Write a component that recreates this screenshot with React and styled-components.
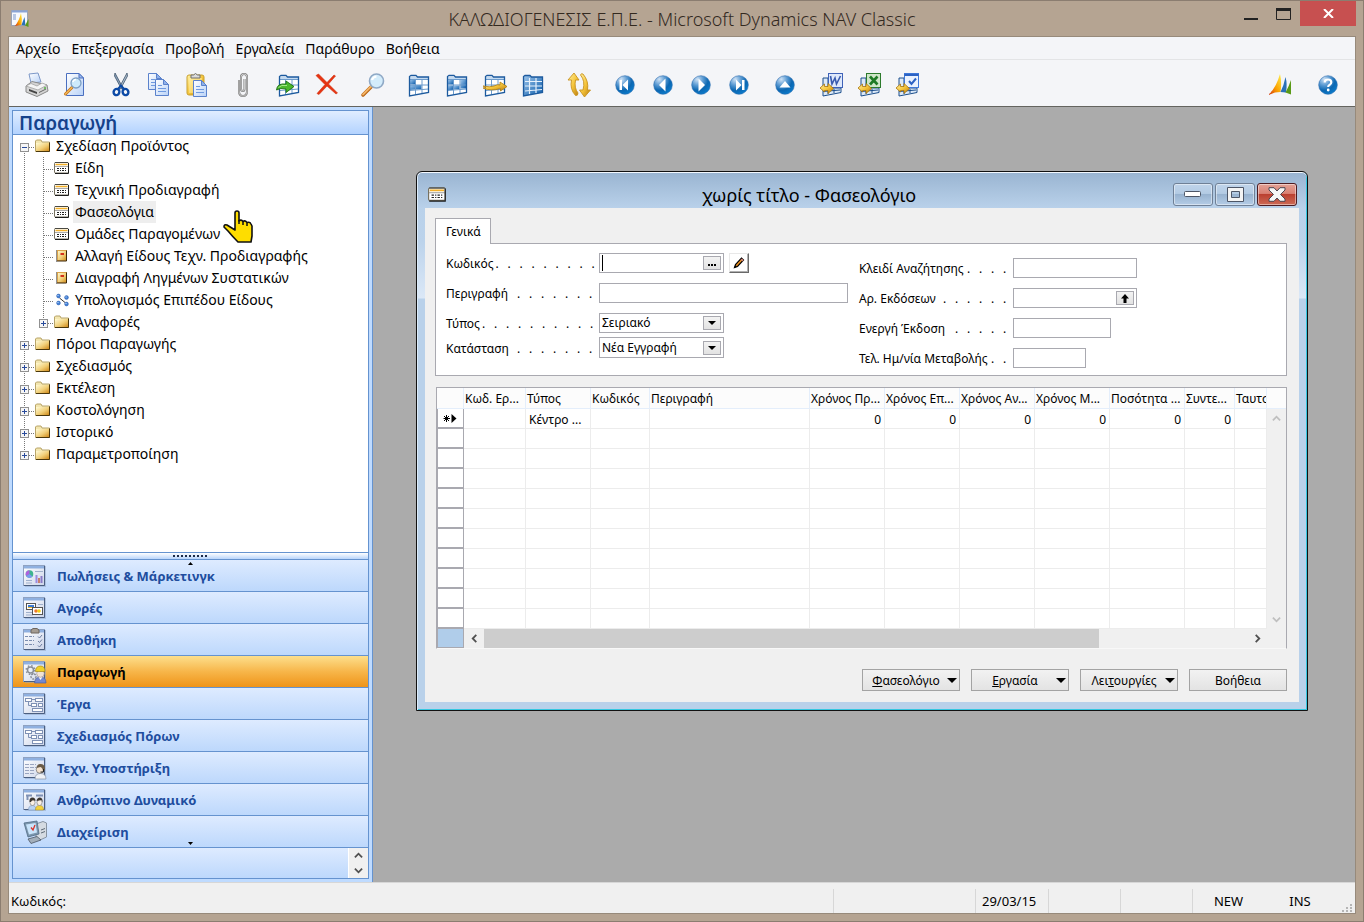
import React from 'react'
import styled, { createGlobalStyle } from 'styled-components'

const GlobalStyle = createGlobalStyle`
  * { box-sizing: border-box; }
  body {
    margin: 0;
    color: #000;
    font-family: "Noto Sans", "Open Sans", sans-serif;
    font-size: 13px;
  }
  button, input, select {
    margin: 0;
    padding: 0;
    border: 0;
    background: none;
    color: inherit;
    font: inherit;
  }
  input:focus, select:focus, button:focus { outline: none; }
  ul { list-style: none; margin: 0; padding: 0; }
  svg { display: block; flex: none; }
`

const Frame = styled.div`
  display: flex;
  flex-direction: column;
  min-height: 100vh;
  padding: 0 7px 7px;
  border: 1px solid #8b7d70;
  background: #b5a492;
`

const TitleBar = styled.header`
  display: grid;
  grid-template-columns: 124px 1fr 124px;
  height: 35px;
`

const AppIcon = styled.div`
  padding: 8px 0 0 3px;
`

const AppTitle = styled.h1`
  margin: 0;
  color: #33291f;
  font-size: 18px;
  font-weight: 300;
  line-height: 36px;
  text-align: center;
  white-space: nowrap;
`

const CaptionButtons = styled.div`
  display: flex;
  justify-content: flex-end;
  align-items: flex-start;
`

const CaptionButton = styled.button`
  display: flex;
  align-items: center;
  justify-content: center;
  width: ${props => props.$close ? '56px' : '33px'};
  height: 25px;
  background: ${props => props.$close ? '#c75050' : 'none'};
`

const Client = styled.div`
  flex: 1;
  display: flex;
  flex-direction: column;
  border: 1px solid #978a7b;
  background: #f4f5f8;
`

const MenuBar = styled.nav`
  display: flex;
  height: 23px;
  padding-left: 7px;
  gap: 11px;
  border-bottom: 1px solid #e3e4e6;
`

const MenuItem = styled.button`
  font-size: 14px;
  line-height: 23px;
`

const Toolbar = styled.div`
  display: flex;
  align-items: center;
  gap: 8px;
  height: 47px;
  padding: 3px 8px 0 9px;
  border-bottom: 1px solid #64645f;
`

const ToolGroup = styled.div`
  display: flex;
  gap: ${props => props.$gap || 0}px;
  margin-left: ${props => props.$right ? 'auto' : '0'};
`

const ToolButton = styled.button`
  display: flex;
  align-items: center;
  justify-content: center;
  width: 38px;
  height: 38px;
`

const Workspace = styled.main`
  flex: 1;
  display: flex;
  background: #ababab;
`

const Sidebar = styled.aside`
  position: relative;
  display: flex;
  width: 364px;
  padding: 3px;
  border-right: 1px solid #6593cf;
  background: #bfdbff;
`

const SidebarBox = styled.div`
  flex: 1;
  display: flex;
  flex-direction: column;
  border: 1px solid #6593cf;
  background: #fff;
`

const SidebarTitle = styled.h2`
  height: 24px;
  margin: 0;
  padding-left: 6px;
  border-bottom: 1px solid #6593cf;
  background: linear-gradient(#e0edff, #b3d3ff);
  color: #15428b;
  font-size: 19px;
  font-weight: 600;
  line-height: 24px;
`

const Tree = styled.ul`
  flex: 1;
  padding-left: 2px;
`

const TreeRow = styled.div`
  display: flex;
  align-items: center;
  height: 22px;
`

const TreeIcon = styled.span`
  width: 20px;
  padding-left: 1px;
`

const TreeLabel = styled.button`
  height: 22px;
  padding: 0 2px;
  background: ${props => props.$selected ? '#eeeeee' : 'none'};
  font-size: 14px;
  line-height: 22px;
  white-space: nowrap;
`

const Splitter = styled.div`
  display: flex;
  align-items: center;
  justify-content: center;
  height: 8px;
  border-top: 1px solid #6593cf;
  border-bottom: 1px solid #6593cf;
  background: linear-gradient(#fff, #b9d5fb);
`

const Departments = styled.div`
  position: relative;
`

const ScrollHint = styled.svg`
  position: absolute;
  left: 175px;
  ${props => props.$end ? 'bottom: 3px;' : 'top: 2px;'}
`

const Department = styled.button`
  display: flex;
  align-items: center;
  gap: 10px;
  width: 100%;
  height: 32px;
  padding-left: 10px;
  border-bottom: 1px solid #6593cf;
  background: ${props => props.$active
    ? 'linear-gradient(#fddf8c, #f7b64a 50%, #ef9419)'
    : 'linear-gradient(#deebff, #bdd8fc)'};
  color: ${props => props.$active ? '#000' : '#204d9e'};
  font-size: 13px;
  font-weight: 700;
`

const SidebarFooter = styled.div`
  display: flex;
  justify-content: flex-end;
  height: 30px;
  background: linear-gradient(#deebff, #bdd8fc);
`

const Spinner = styled.div`
  display: flex;
  flex-direction: column;
  width: 20px;
  border-left: 1px solid #fff;
  background: #f0f0f0;
`

const SpinnerButton = styled.button`
  flex: 1;
  display: flex;
  align-items: center;
  justify-content: center;
`

const HandCursor = styled.svg`
  position: absolute;
  left: 214px;
  top: 103px;
`

const Desktop = styled.div`
  position: relative;
  flex: 1;
`

const FormWindow = styled.section`
  position: absolute;
  left: 43px;
  top: 64px;
  width: 892px;
  padding: 1px 8px 8px;
  border: 1px solid #111;
  border-radius: 6px 6px 0 0;
  background: linear-gradient(#99b4d1, #b9d1ea 36px, #bcd3eb 70px, #dbe8f7 126px, #b9d1ea 127px);
  box-shadow: inset 0 1px #f2f8ff, inset 1px 0 #dcecfa, inset -1px -1px #35c7e0;
`

const FormTitleBar = styled.div`
  display: grid;
  grid-template-columns: 19px 1fr 126px;
  align-items: center;
  height: 35px;
  padding: 8px 2px 0 3px;
`

const FormTitle = styled.h2`
  margin: 0;
  font-size: 18px;
  font-weight: 400;
  line-height: 24px;
  text-align: center;
`

const FormButtons = styled.div`
  display: flex;
  justify-content: flex-end;
  gap: 2px;
`

const FormButton = styled.button`
  display: flex;
  align-items: center;
  justify-content: center;
  width: 40px;
  height: 23px;
  border: 1px solid ${props => props.$close ? '#4d1c22' : '#6f8096'};
  border-radius: 3px;
  background: ${props => props.$close
    ? 'linear-gradient(#e3a196, #d98073 45%, #bb4030 50%, #cc6a55)'
    : 'linear-gradient(#c0d4ea, #b3cbe4 45%, #98b3d0 50%, #b4cce6)'};
  box-shadow: inset 0 0 0 1px rgba(255, 255, 255, 0.45);
`

const FormBody = styled.div`
  padding: 10px 12px 11px 10px;
  background: #f0f0f0;
`

const Tab = styled.button`
  position: relative;
  display: block;
  width: 56px;
  height: 26px;
  margin-bottom: -1px;
  padding-left: 10px;
  border: 1px solid #a9a9b0;
  border-bottom: 0;
  background: #fff;
  font-size: 12px;
  text-align: left;
`

const Panel = styled.div`
  display: grid;
  grid-template-columns: 413px 1fr;
  padding: 9px 10px 7px;
  border: 1px solid #a9a9b0;
  background: #fff;
`

const FieldColumn = styled.div`
  display: flex;
  flex-direction: column;
  gap: 10px;
  padding-top: ${props => props.$lower ? '5px' : '0'};
`

const FieldPair = styled.div`
  display: flex;
  flex-direction: column;
  gap: 4px;
`

const FieldRow = styled.div`
  display: flex;
  align-items: center;
`

const FieldCaption = styled.label`
  display: flex;
  justify-content: space-between;
  width: ${props => props.$wide ? '154px' : '153px'};
  height: 20px;
  font-size: 12px;
  line-height: 22px;
  white-space: nowrap;
`

const Leader = styled.span`
  display: flex;
`

const LeaderDot = styled.span`
  width: 12px;
  padding-left: 2px;
`

const Box = styled.div`
  display: flex;
  align-items: center;
  width: ${props => props.$w}px;
  height: ${props => props.$h || 20}px;
  padding: 0 2px;
  border: 1px solid #a9a9b0;
  background: #fff;
`

const Caret = styled.span`
  width: 1px;
  height: 16px;
  background: #000;
`

const TextInput = styled.input`
  flex: 1;
  width: 0;
  height: 100%;
  font-size: 12px;
`

const Select = styled.select`
  flex: 1;
  width: 0;
  appearance: none;
  font-size: 12px;
  line-height: 18px;
`

const MiniButton = styled.button`
  display: flex;
  align-items: center;
  justify-content: center;
  width: 18px;
  height: 14px;
  border: 1px solid #a9a9b0;
  background: linear-gradient(#f3f3f3, #e2e2e2);
`

const EditButton = styled.button`
  display: flex;
  align-items: center;
  justify-content: center;
  width: 20px;
  height: 20px;
  margin-left: 5px;
  border: 1px solid;
  border-color: #e8e8e8 #696969 #696969 #e8e8e8;
  background: #fff;
  box-shadow: inset -1px -1px #b0b0b0;
`

const Grid = styled.div`
  margin: 11px 0 0 1px;
  border: 1px solid #a9a9b0;
  border-bottom-color: #f8f8f8;
`

const Lines = styled.div`
  display: flex;
`

const Table = styled.table`
  flex: 1;
  width: 0;
  table-layout: fixed;
  border-collapse: separate;
  border-spacing: 0;
  background: #fff;
  font-size: 12px;
`

const Th = styled.th`
  height: 21px;
  padding: 1px 0 0 1px;
  overflow: hidden;
  border-right: 1px solid #e4eefb;
  border-bottom: 1px solid #e4eefb;
  background: #fcfcfc;
  font-weight: 400;
  line-height: 19px;
  text-align: left;
  white-space: nowrap;
`

const Td = styled.td`
  height: 20px;
  padding: 2px 3px 0;
  overflow: hidden;
  border-right: 1px solid #ececec;
  border-bottom: 1px solid #ececec;
  line-height: 17px;
  text-align: ${props => props.$num ? 'right' : 'left'};
  white-space: nowrap;
`

const RowSelector = styled.td`
  height: 20px;
  padding: 0 0 0 5px;
  border: 1px solid #a9a9b0;
  border-top-width: 0;
  border-bottom-width: 2px;
`

const VScroll = styled.div`
  display: flex;
  flex-direction: column;
  width: 19px;
  background: #f0f0f0;
`

const VScrollHead = styled.div`
  height: 21px;
  border-bottom: 1px solid #e4eefb;
  background: #fcfcfc;
`

const VScrollTrack = styled.div`
  flex: 1;
  display: flex;
  flex-direction: column;
  justify-content: space-between;
`

const ArrowButton = styled.button`
  display: flex;
  align-items: center;
  justify-content: center;
  width: ${props => props.$w || 18}px;
  height: 19px;
`

const HScroll = styled.div`
  display: flex;
  height: 19px;
`

const Corner = styled.div`
  width: 27px;
  border: 1px solid #a9a9b0;
  border-top: 0;
  background: #b0cdea;
`

const Thumb = styled.div`
  width: 615px;
  background: #cdcdcd;
`

const Spacer = styled.div`
  flex: 1;
`

const Actions = styled.div`
  display: flex;
  justify-content: flex-end;
  gap: 11px;
  margin-top: 20px;
`

const ActionButton = styled.button`
  display: flex;
  align-items: center;
  width: 98px;
  height: 22px;
  padding: 0 2px 0 2px;
  border: 1px solid #a3a3a3;
  background: linear-gradient(#f2f2f2, #e3e3e3);
  font-size: 12px;
`

const ActionText = styled.span`
  flex: 1;
  text-align: center;
`

const StatusBar = styled.footer`
  display: flex;
  align-items: flex-end;
  height: 31px;
  border-top: 1px solid #d7d7d7;
  background: #f0f0f0;
`

const StatusCell = styled.div`
  flex: ${props => props.$w ? 'none' : '1'};
  width: ${props => props.$w ? props.$w + 'px' : 'auto'};
  height: 24px;
  padding-left: ${props => props.$pad || 0}px;
  border-left: ${props => props.$line ? '1px solid #d7d7d7' : '0'};
  font-size: 13px;
  line-height: 24px;
  text-align: ${props => props.$center ? 'center' : 'left'};
`

/* ---------- drawings ---------- */

const Defs = () => (
  <svg width="0" height="0" style={{ position: 'absolute' }} aria-hidden="true">
    <defs>
      <radialGradient id="ball" cx="0.3" cy="0.2" r="0.9">
        <stop offset="0" stopColor="#cfe2f5" />
        <stop offset="0.35" stopColor="#5c9bd3" />
        <stop offset="0.65" stopColor="#0b67b2" />
        <stop offset="1" stopColor="#0a7fd0" />
      </radialGradient>
      <linearGradient id="gold" x1="0" y1="0" x2="1" y2="1">
        <stop offset="0" stopColor="#fff3a8" />
        <stop offset="0.5" stopColor="#f6c63c" />
        <stop offset="1" stopColor="#b87a0c" />
      </linearGradient>
      <linearGradient id="folder" x1="0" y1="0" x2="1" y2="1">
        <stop offset="0" stopColor="#fffbd6" />
        <stop offset="0.55" stopColor="#f1cf78" />
        <stop offset="1" stopColor="#cf8a1a" />
      </linearGradient>
      <linearGradient id="sheet" x1="0" y1="0" x2="1" y2="1">
        <stop offset="0" stopColor="#ffffff" />
        <stop offset="1" stopColor="#b9d2f7" />
      </linearGradient>
      <linearGradient id="pane" x1="0" y1="0" x2="1" y2="1">
        <stop offset="0" stopColor="#ffffff" />
        <stop offset="1" stopColor="#ccd5ea" />
      </linearGradient>
      <linearGradient id="blueCell" x1="0" y1="0" x2="1" y2="1">
        <stop offset="0" stopColor="#9cc4ea" />
        <stop offset="1" stopColor="#0b5cab" />
      </linearGradient>
      <linearGradient id="sail" x1="0" y1="1" x2="1" y2="0">
        <stop offset="0" stopColor="#d2350f" />
        <stop offset="0.45" stopColor="#fba100" />
        <stop offset="1" stopColor="#fff04a" />
      </linearGradient>
    </defs>
  </svg>
)

const Icon = ({ children, size = 26 }) => (
  <svg width={size} height={size} viewBox={`0 0 ${size} ${size}`} aria-hidden="true">{children}</svg>
)

const Printer = () => (
  <Icon>
    <path d="M7 11 L5 2 L14 1 L17 10Z" fill="url(#sheet)" stroke="#7d98c8" />
    <path d="M2 14 L8 9.500 L23 13 L24 19 L13 24.500 L2 20Z" fill="#d4d4d4" stroke="#8a8a8a" />
    <path d="M2 14 L14 18 L23 13 L18 11 L13 14 L7 11.500Z" fill="#f5f5f5" stroke="#999" strokeWidth="0.700" />
    <path d="M5 17 L13 20 V22 L5 19Z" fill="#444" />
    <path d="M15 20.500 L22 17" stroke="#666" />
    <circle cx="21" cy="16" r="1" fill="#55b844" />
  </Icon>
)

const Preview = () => (
  <Icon>
    <path d="M4.500 1.500 H17 L21.500 6 V23.500 H4.500Z" fill="url(#sheet)" stroke="#4a6fc0" />
    <path d="M17 1.500 V6 H21.500Z" fill="#9fbdf0" stroke="#4a6fc0" />
    <path d="M10 15.500 L3.500 22" stroke="#c77515" strokeWidth="3" strokeLinecap="round" />
    <path d="M10 15.500 L3.500 22" stroke="#f5b95a" strokeWidth="1.200" strokeLinecap="round" />
    <circle cx="14" cy="11" r="5" fill="#cdeafc" stroke="#7d9fc4" strokeWidth="1.300" />
    <path d="M10.800 10 A3.500 3.500 0 0 1 14 7.500" stroke="#fff" strokeWidth="1.500" fill="none" />
  </Icon>
)

const Scissors = () => (
  <Icon>
    <path d="M7 1 L15 16 L13.500 17 L6.500 4Z" fill="#8aa0b8" stroke="#3f546c" strokeWidth="0.800" />
    <path d="M19 1 L11 16 L12.500 17 L19.500 4Z" fill="#a8bacb" stroke="#3f546c" strokeWidth="0.800" />
    <ellipse cx="8.500" cy="20" rx="2.800" ry="3.200" fill="none" stroke="#0c4aa6" strokeWidth="2.400" transform="rotate(25 8.500 20)" />
    <ellipse cx="17.500" cy="20" rx="2.800" ry="3.200" fill="none" stroke="#0c4aa6" strokeWidth="2.400" transform="rotate(-25 17.500 20)" />
    <path d="M10 17 L13 13.500 L16 17" fill="none" stroke="#0c4aa6" strokeWidth="2" />
  </Icon>
)

const Page = ({ x, y }) => (
  <g transform={`translate(${x} ${y})`}>
    <path d="M0.500 0.500 H8.500 L13.500 5.500 V16.500 H0.500Z" fill="url(#sheet)" stroke="#5b82cc" />
    <path d="M8.500 0.500 V5.500 H13.500Z" fill="#8fb1ea" stroke="#5b82cc" />
    <path d="M3 6.500 H7 M3 9.500 H11 M3 12.500 H11" stroke="#6f9ae0" />
  </g>
)

const CopyIcon = () => (
  <Icon>
    <Page x={2} y={1} />
    <Page x={9} y={7} />
  </Icon>
)

const PasteIcon = () => (
  <Icon>
    <rect x="3" y="3" width="17" height="20" rx="2" fill="url(#gold)" stroke="#c9a02e" />
    <path d="M5 6 H18 V21 H5Z" fill="#fff2b0" opacity="0.500" />
    <path d="M7 6 V3 H9.500 Q11.500 0 13.500 3 H16 V6Z" fill="#dcdcdc" stroke="#6f6f6f" />
    <Page x={9} y={8} />
  </Icon>
)

const Clip = () => (
  <Icon>
    <path d="M9 8 V19 Q9 24 13 24 Q17 24 17 19 V5 Q17 2 14 2 Q11 2 11 5 V17 Q11 19 13 19 Q14.500 19 14.500 17 V7" fill="none" stroke="#777" strokeWidth="2" />
    <path d="M9 8 V19 Q9 24 13 24 Q17 24 17 19 V5 Q17 2 14 2 Q11 2 11 5 V17 Q11 19 13 19 Q14.500 19 14.500 17 V7" fill="none" stroke="#e0e0e0" strokeWidth="0.800" />
  </Icon>
)

// Table in slight perspective: tab on the top left, bottom edge rising to the right.
const sheetOutline = 'M3.500 24 V4.500 L5 3.500 H10 L11.500 5 H22.500 V20.500Z'
const sheetGrid = 'M3.500 7.500 H22.500 M3.500 13 H22.500 M3.500 18.500 L22.500 17 M9.500 7.500 V22.500 M16 7.500 V21.500'

const Sheet = ({ fills = [] }) => (
  <g>
    <path d={sheetOutline} fill="#fff" />
    {fills.map(d => <path key={d} d={d} fill="url(#blueCell)" />)}
    <path d={sheetGrid} fill="none" stroke="#6c9bcc" />
    <path d="M4 5 H22 V7 H4Z" fill="#c3daf1" />
    <path d={sheetOutline} fill="none" stroke="#1c5a9e" strokeWidth="1.300" />
  </g>
)

const sheetFills = {
  left: ['M4 13 H15.500 V17 L4 18Z', 'M4 8 H9 V12.500 H4Z'],
  middle: ['M4 8 H9 V12.500 H4Z', 'M4 13.500 H9 V18 H4Z', 'M10 13.500 H15.500 V17 L10 17.500Z', 'M16.500 8 H22 V16.500 H16.500Z'],
}

const SheetIcon = ({ fills }) => <Icon><Sheet fills={fills} /></Icon>

const SheetFull = () => (
  <Icon>
    <path d={sheetOutline} fill="url(#blueCell)" stroke="#1c5a9e" strokeWidth="1.300" />
    <path d="M5 9.500 H22 M5 14 H22 M5 19 L22 17.500 M9.500 6 V22 M16 6 V21" stroke="#e6f1fc" strokeWidth="1.200" />
  </Icon>
)

const SheetJump = () => (
  <Icon>
    <Sheet fills={['M10 13.500 H15.500 V17 L10 17.500Z']} />
    <path d="M1 14 Q8 15.500 12 14 Q16 12 18 13 V10 L25 14.500 L18.500 19 V16.500 Q9 19.500 1 16 L4 15.500Z" fill="url(#gold)" stroke="#b07c10" strokeWidth="0.800" />
  </Icon>
)

const SheetInsert = () => (
  <Icon>
    <Sheet />
    <path d="M0.500 18 Q1 11 10 12 V9 L18 14.500 L10 20.500 V17 Q4 15.500 0.500 18Z" fill="#4cb82c" stroke="#1c6e12" strokeWidth="0.900" />
    <path d="M2.500 15.500 Q5 12.500 11 13.500" stroke="#a5ea88" strokeWidth="1" fill="none" />
  </Icon>
)

const DeleteIcon = () => (
  <Icon>
    <path d="M2 3.500 L4.500 2 L13 10.500 L20 3 L21.500 4 L14.500 12 L23.500 21 L22 22 L13 14 L5 22.500 L3 21.500 L11 12.500Z" fill="#e63312" stroke="#d22f0c" strokeWidth="0.600" />
  </Icon>
)

const Magnifier = () => (
  <Icon>
    <path d="M11 15 L3 23" stroke="#b76212" strokeWidth="3.500" strokeLinecap="round" />
    <path d="M11 14.500 L3 22.500" stroke="#f3b466" strokeWidth="1.800" strokeLinecap="round" />
    <circle cx="16.500" cy="9" r="7" fill="#d3ecfb" stroke="#8fa9c6" strokeWidth="1.600" />
    <path d="M12 8 A5 5 0 0 1 16.500 4.500" stroke="#fff" strokeWidth="2.200" fill="none" />
  </Icon>
)

const SortIcon = () => (
  <Icon>
    <path d="M8 1 L13 8 H9.500 Q8 16 12 21 Q12 24 9.500 23.500 Q3.500 17 5.500 8 H2Z" fill="url(#gold)" stroke="#c8931f" strokeWidth="0.900" />
    <path d="M18.500 25 L13.500 18 H17 Q19.500 9 14.500 3 Q15 1 17 2 Q23 9 21.500 18 H24.500Z" fill="url(#gold)" stroke="#c8931f" strokeWidth="0.900" />
  </Icon>
)

const ballGlyphs = {
  first: 'M7.500 8 H10 V18 H7.500Z M10.500 13 L16 7.500 V18.500Z',
  prev: 'M9 13 L15.500 6.500 V19.500Z',
  next: 'M17 13 L10.500 6.500 V19.500Z',
  last: 'M16 8 H18.500 V18 H16Z M15.500 13 L10 7.500 V18.500Z',
  up: 'M13 9 L18.500 15.500 H7.500Z',
}

const Ball = ({ glyph }) => (
  <Icon>
    <circle cx="13" cy="13" r="9.300" fill="url(#ball)" stroke="#2b6cae" strokeWidth="0.600" />
    <path d={ballGlyphs[glyph]} fill="#fff" />
  </Icon>
)

const HelpIcon = () => (
  <Icon>
    <circle cx="13" cy="13" r="9.300" fill="url(#ball)" stroke="#2b6cae" strokeWidth="0.600" />
    <path d="M9.700 10.500 Q9.700 7.500 13 7.500 Q16.300 7.500 16.300 10.200 Q16.300 12 14.500 12.900 Q13.200 13.600 13.200 15" fill="none" stroke="#fff" strokeWidth="2.200" />
    <circle cx="13.200" cy="18" r="1.400" fill="#fff" />
  </Icon>
)

const Export = ({ border, fill, glyph, stroke, weight }) => (
  <Icon>
    <path d="M5 6 V24 L23 20.500 V16 H10 V6Z" fill="#dce9f8" stroke="#1c4f8c" />
    <path d="M5 19.500 L22 18 M10 17 V22 M16 17 V21" stroke="#1c4f8c" />
    <rect x="10.500" y="1.500" width="14" height="14" fill={fill} stroke={border} />
    <path d={glyph} fill="none" stroke={stroke} strokeWidth={weight} />
    <path d="M2 16 L6.500 12 V14.500 H10 V11.500 L15.500 16.500 L10 21.500 V18.500 H6.500 V20Z" fill="url(#gold)" stroke="#a8720a" strokeWidth="0.800" />
  </Icon>
)

const Sails = () => (
  <Icon>
    <path d="M2 22 Q9 16 13 2 Q15 10 13.500 20 Q7 20 2 23Z" fill="url(#sail)" />
    <path d="M13.500 20 Q17 13 18.500 5 Q20.500 12 19 20.500Z" fill="#2a70b8" />
    <path d="M18.500 20.500 Q22 14 24 8 V22.500Z" fill="#5a9a16" />
  </Icon>
)

const Folder = () => (
  <svg width="16" height="14" viewBox="0 0 16 14" aria-hidden="true">
    <path d="M0.500 12.500 V2 L1.500 1 H6 L7 3 H14.500 V12.500Z" fill="#f3e6b0" stroke="#b8a468" />
    <path d="M1 4 H14 V12 H1Z" fill="url(#folder)" />
    <path d="M14.500 3.500 V12.500 H1" fill="none" stroke="#4a370c" />
  </svg>
)

const FormGlyph = ({ width = 16, height = 14 }) => (
  <svg width={width} height={height} viewBox="0 0 16 14" aria-hidden="true">
    <rect x="0.500" y="1.500" width="14" height="10.500" rx="1" fill="#fff" stroke="#77715f" />
    <path d="M1 1.500 H14" stroke="#4a4a44" />
    <path d="M1.500 3.500 H13.500" stroke="#f3b02a" strokeWidth="1.500" />
    <path d="M1 5.500 H14" stroke="#555" strokeWidth="0.500" />
    <path d="M3 7.500 H13 M3 9.500 H13" stroke="#222" strokeDasharray="2 1 1 1" />
    <path d="M1 12.500 H14.500 V2" fill="none" stroke="#1c1c1c" />
  </svg>
)

const BookGlyph = () => (
  <svg width="16" height="14" viewBox="0 0 16 14" aria-hidden="true">
    <rect x="3.500" y="1.500" width="9" height="10" fill="url(#folder)" stroke="#d9a24a" />
    <path d="M12.500 1.500 V12 H3" fill="none" stroke="#3b2606" />
    <path d="M6.500 5 H10" stroke="#d5301a" strokeWidth="2" />
    <path d="M2.500 1.500 V12.500" stroke="#222" strokeDasharray="1 1" />
  </svg>
)

const NodesGlyph = () => (
  <svg width="16" height="14" viewBox="0 0 16 14" aria-hidden="true">
    <path d="M5.500 5 L11 9.500" stroke="#333" />
    {[[4.500, 3], [12.500, 4.500], [4.500, 10], [12.500, 11]].map(([x, y]) => (
      <circle key={`${x}-${y}`} cx={x} cy={y} r="1.900" fill="#4583d8" stroke="#2858a8" strokeWidth="0.500" />
    ))}
    <path d="M3.500 2.500 h1 M11.500 4 h1 M3.500 9.500 h1 M11.500 10.500 h1" stroke="#cfe3ff" />
  </svg>
)

const treeIcons = { folder: Folder, form: FormGlyph, book: BookGlyph, nodes: NodesGlyph }

// One 19px step of the tree lines: what runs above, below and to the right.
const Branch = ({ up, down, right, box }) => (
  <svg width="19" height="22" viewBox="0 0 19 22" aria-hidden="true">
    {up && <path d="M9.500 0 V12" stroke="#777" strokeDasharray="1 1" />}
    {down && <path d="M9.500 12 V22" stroke="#777" strokeDasharray="1 1" />}
    {right && <path d="M10 12.500 H19" stroke="#777" strokeDasharray="1 1" />}
    {box && (
      <g>
        <rect x="5.500" y="8.500" width="8" height="8" fill="#f6f6f6" stroke="#919191" />
        <path d="M7 12.500 H12" stroke="#284a9b" />
        {box === '+' && <path d="M9.500 10 V15" stroke="#284a9b" />}
      </g>
    )}
  </svg>
)

const Chevron = ({ d, color = '#505050', size = 10 }) => (
  <svg width={size} height={size} viewBox="0 0 10 10" aria-hidden="true">
    <path d={d} fill="none" stroke={color} strokeWidth="2" />
  </svg>
)

const chevrons = {
  up: 'M1 7 L5 3 L9 7',
  down: 'M1 3 L5 7 L9 3',
  left: 'M7 1 L3 5 L7 9',
  right: 'M3 1 L7 5 L3 9',
}

const DownTriangle = ({ width = 8 }) => (
  <svg width={width} height={width / 2} viewBox="0 0 10 5" aria-hidden="true"><path d="M0 0 H10 L5 5Z" /></svg>
)

const paneArt = {
  sales: (
    <g>
      <circle cx="6.500" cy="10" r="3.800" fill="#3fb48f" />
      <path d="M6.500 10 V6.200 A4 4 0 0 0 3 12Z" fill="#b05fe0" />
      <path d="M6.500 10 L3 12 A4 4 0 0 0 9.500 12.500Z" fill="#7a9af0" />
      <path d="M12 7.500 H20 M3 16.500 H9 M3 19 H9" stroke="#9fb0cc" />
      <path d="M13.500 19 V11" stroke="#9c8ae0" strokeWidth="2" />
      <path d="M16 19 V14" stroke="#c8806f" strokeWidth="2" />
      <path d="M18.500 19 V12" stroke="#8a7bc8" strokeWidth="2" />
    </g>
  ),
  purchase: (
    <g>
      <path d="M3 16.500 H10 M3 19 H10 M15 8.500 H20" stroke="#9fb0cc" />
      <rect x="3.500" y="7.500" width="9" height="6" fill="#fff" stroke="#555" />
      <rect x="5" y="9" width="6" height="2" fill="#3a78d0" />
      <rect x="5" y="11" width="6" height="1" fill="#f0b824" />
      <rect x="9.500" y="11.500" width="10" height="7" fill="#fff" stroke="#555" />
      <circle cx="13" cy="15" r="1.800" fill="#f07a2a" />
      <circle cx="16" cy="15" r="1.800" fill="#f3d017" />
    </g>
  ),
  stock: (
    <g>
      <path d="M8 5 V2 L10 0.500 H14 L16 2 V5Z" fill="#a59c92" stroke="#6e665e" />
      <path d="M2 8.500 H11 M2 12.500 H11 M2 16.500 H11" stroke="#7b8db0" strokeDasharray="3 1" />
      <path d="M15 8.500 L16.500 10 L19 7 M15 13 L16.500 14.500 L19 11.500 M15 17.500 L16.500 19 L19 16" fill="none" stroke="#6d7ea0" />
    </g>
  ),
  production: (
    <g>
      <circle cx="7.500" cy="10" r="3" fill="none" stroke="#8a8f98" strokeWidth="1.500" />
      <circle cx="7.500" cy="10" r="4.300" fill="none" stroke="#8a8f98" strokeWidth="1.500" strokeDasharray="1.500 1.900" />
      <circle cx="10.500" cy="16.500" r="2.500" fill="none" stroke="#8a8f98" strokeWidth="1.500" strokeDasharray="2 1" />
      <path d="M11.500 23 Q12 17 17.500 17 Q23 17 23 23Z" fill="#7489d0" stroke="#4a5ca0" strokeWidth="0.700" />
      <path d="M15.500 17 L17.500 20 L19.500 17Z" fill="#fff" />
      <circle cx="17.500" cy="13.500" r="3.800" fill="#f0e2d4" stroke="#988" strokeWidth="0.600" />
      <path d="M12.500 11.500 Q12.500 6 17.500 6 Q22 6 22 11.500Z" fill="#f0d22a" stroke="#a98a10" strokeWidth="0.700" />
    </g>
  ),
  boxes: (
    <g fill="#fff" stroke="#7f91b5">
      <path d="M5.500 10 V13.500 H9 M9 7.500 H14" fill="none" />
      <rect x="2.500" y="6.500" width="6" height="3" />
      <rect x="12.500" y="6.500" width="7" height="3" />
      <rect x="8.500" y="11.500" width="5" height="3" />
      <rect x="15.500" y="11.500" width="4" height="3" />
      <rect x="9.500" y="16.500" width="10" height="3" />
    </g>
  ),
  support: (
    <g>
      <path d="M2 8.500 H13 M2 11.500 H13 M2 14.500 H11 M2 17.500 H11" stroke="#9aa5c0" strokeDasharray="4 1" />
      <path d="M12 23 Q12 17.500 17.500 17.500 Q23 17.500 23 23Z" fill="#eef1f6" stroke="#8893a6" strokeWidth="0.700" />
      <circle cx="17" cy="13.500" r="3.800" fill="#f4e2ce" stroke="#555" strokeWidth="0.600" />
      <path d="M13.500 12 Q14 7.500 18 8 Q22.500 8.500 22 14 L20 15.500 Q20 12 17.500 11Z" fill="#6b5c48" />
      <path d="M20.500 13 V16 H17.500" fill="none" stroke="#222" />
    </g>
  ),
  people: (
    <g>
      <path d="M3 7.500 H9 M13 7.500 H20 M4.500 8 V12" stroke="#7f91b5" strokeWidth="2" />
      <path d="M5.500 22 Q5.500 17.500 9.500 17.500 Q13 17.500 13 22Z" fill="#b9d4f4" stroke="#7893b8" strokeWidth="0.600" />
      <path d="M12.500 22 Q12.500 17.500 16.500 17.500 Q20.500 17.500 20.500 22Z" fill="#f4d33c" stroke="#b4962a" strokeWidth="0.600" />
      <ellipse cx="9.500" cy="14.500" rx="2.500" ry="3" fill="#fbf0e4" stroke="#777" strokeWidth="0.600" />
      <ellipse cx="16.500" cy="14.500" rx="2.500" ry="3" fill="#fbf0e4" stroke="#777" strokeWidth="0.600" />
      <path d="M6.500 14 Q6 9.500 9.500 9.500 Q12.500 9.500 12.500 13 Q9 11 8 14Z" fill="#3c3630" />
      <path d="M13.500 13 Q14 9.500 17 9.500 Q20 10 19.500 14.500 L18.500 12Z" fill="#3c3630" />
    </g>
  ),
}

const PaneIcon = ({ name }) => {
  if (name === 'admin') {
    return (
      <svg width="24" height="24" viewBox="0 0 24 24" aria-hidden="true">
        <path d="M13 4 L20 1.500 L23.500 3 V17 L17 20 L13 18Z" fill="#d5dbe2" stroke="#8692a0" />
        <path d="M18 10 L22 8.500 M18 13 L22 11.500" stroke="#5e6a76" />
        <path d="M1 3 L14 1 L16 14 L5 17Z" fill="#7c96ad" stroke="#4f6b85" strokeWidth="0.800" />
        <path d="M3 4.500 L12.500 3 L14 12.500 L6 14.500Z" fill="#c9e4fb" />
        <path d="M8 7.500 L10 10 L12 5" fill="none" stroke="#d9342a" strokeWidth="1.300" />
        <path d="M5 19 L14 16.500 L18 20 L8 23.500Z" fill="#a3afbb" stroke="#4a5663" strokeWidth="0.800" />
      </svg>
    )
  }
  return (
    <svg width="24" height="24" viewBox="0 0 24 24" aria-hidden="true">
      <rect x="2" y="2" width="21" height="21" fill="#8fa3c4" opacity="0.500" />
      <rect x="0.500" y="1.500" width="21" height="20" fill="url(#pane)" stroke="#8fa2c2" />
      <rect x="1" y="2" width="20" height="2.500" fill="#8fb0e0" />
      <path d="M21.500 2 V21.500 H1" fill="none" stroke="#4b5f80" />
      {paneArt[name]}
    </svg>
  )
}

/* ---------- data ---------- */

const menus = ['Αρχείο', 'Επεξεργασία', 'Προβολή', 'Εργαλεία', 'Παράθυρο', 'Βοήθεια']

const toolGroups = [
  [['Εκτύπωση', <Printer />], ['Προεπισκόπηση', <Preview />]],
  [['Αποκοπή', <Scissors />], ['Αντιγραφή', <CopyIcon />], ['Επικόλληση', <PasteIcon />]],
  [['Συνημμένα', <Clip />]],
  [['Εισαγωγή', <SheetInsert />], ['Διαγραφή', <DeleteIcon />]],
  [['Εύρεση', <Magnifier />]],
  [
    ['Φίλτρο πεδίου', <SheetIcon fills={sheetFills.left} />],
    ['Φίλτρο πίνακα', <SheetIcon fills={sheetFills.middle} />],
    ['Φίλτρο ροής', <SheetJump />],
    ['Εμφάνιση όλων', <SheetFull />],
  ],
  [['Ταξινόμηση', <SortIcon />]],
  [
    ['Πρώτη', <Ball glyph="first" />],
    ['Προηγούμενη', <Ball glyph="prev" />],
    ['Επόμενη', <Ball glyph="next" />],
    ['Τελευταία', <Ball glyph="last" />],
  ],
  [['Λίστα', <Ball glyph="up" />]],
  [
    ['Word', <Export border="#3f62b8" fill="#dfe9fb" stroke="#3a5cb0" weight="1.600" glyph="M12.500 4 L14 12 L17 6 L18.500 12 L22.500 4" />],
    ['Excel', <Export border="#2c7a2c" fill="#cfe6c8" stroke="#1e7a24" weight="2.600" glyph="M14 4.500 L21.500 12.500 M21.500 4.500 L14 12.500" />],
    ['Εργασία', <Export border="#3f78d8" fill="#eaf2ff" stroke="#2c62c4" weight="2" glyph="M10.500 3 H24.500 M15 9 L17.500 12 L22 6.500" />],
  ],
]

const tree = [
  { label: 'Σχεδίαση Προϊόντος', icon: 'folder', box: '-', first: true },
  { label: 'Είδη', icon: 'form', child: true },
  { label: 'Τεχνική Προδιαγραφή', icon: 'form', child: true },
  { label: 'Φασεολόγια', icon: 'form', child: true, selected: true },
  { label: 'Ομάδες Παραγομένων', icon: 'form', child: true },
  { label: 'Αλλαγή Είδους Τεχν. Προδιαγραφής', icon: 'book', child: true },
  { label: 'Διαγραφή Ληγμένων Συστατικών', icon: 'book', child: true },
  { label: 'Υπολογισμός Επιπέδου Είδους', icon: 'nodes', child: true },
  { label: 'Αναφορές', icon: 'folder', child: true, box: '+', last: true },
  { label: 'Πόροι Παραγωγής', icon: 'folder', box: '+' },
  { label: 'Σχεδιασμός', icon: 'folder', box: '+' },
  { label: 'Εκτέλεση', icon: 'folder', box: '+' },
  { label: 'Κοστολόγηση', icon: 'folder', box: '+' },
  { label: 'Ιστορικό', icon: 'folder', box: '+' },
  { label: 'Παραμετροποίηση', icon: 'folder', box: '+', last: true },
]

const departments = [
  ['Πωλήσεις & Μάρκετινγκ', 'sales'],
  ['Αγορές', 'purchase'],
  ['Αποθήκη', 'stock'],
  ['Παραγωγή', 'production'],
  ['Έργα', 'boxes'],
  ['Σχεδιασμός Πόρων', 'boxes'],
  ['Τεχν. Υποστήριξη', 'support'],
  ['Ανθρώπινο Δυναμικό', 'people'],
  ['Διαχείριση', 'admin'],
]

const columns = [
  { title: 'Κωδ. Ερ...', width: 62, value: '' },
  { title: 'Τύπος', width: 65, value: 'Κέντρο ...' },
  { title: 'Κωδικός', width: 59, value: '' },
  { title: 'Περιγραφή', width: 160, value: '' },
  { title: 'Χρόνος Πρ...', width: 75, value: '0' },
  { title: 'Χρόνος Επ...', width: 75, value: '0' },
  { title: 'Χρόνος Αν...', width: 75, value: '0' },
  { title: 'Χρόνος Μ...', width: 75, value: '0' },
  { title: 'Ποσότητα ...', width: 75, value: '0' },
  { title: 'Συντε...', width: 50, value: '0' },
  { title: 'Ταυτο', value: '' },
]

/* ---------- parts ---------- */

const Caption = ({ id, text, dots, wide }) => (
  <FieldCaption htmlFor={id} $wide={wide}>
    <span>{text}</span>
    <Leader aria-hidden="true">
      {Array.from({ length: dots }, (_, i) => <LeaderDot key={i}>.</LeaderDot>)}
    </Leader>
  </FieldCaption>
)

const TreeItem = ({ item }) => {
  const Glyph = treeIcons[item.icon]
  return (
    <li>
      <TreeRow>
        {item.child
          ? <Branch up down />
          : <Branch up={!item.first} down={!item.last} right box={item.box} />}
        {item.child && <Branch up down={!item.last} right box={item.box} />}
        <TreeIcon><Glyph /></TreeIcon>
        <TreeLabel $selected={item.selected}>{item.label}</TreeLabel>
      </TreeRow>
    </li>
  )
}

const Navigation = () => (
  <Sidebar>
    <SidebarBox>
      <SidebarTitle>Παραγωγή</SidebarTitle>
      <Tree>
        {tree.map(item => <TreeItem key={item.label} item={item} />)}
      </Tree>
      <Splitter>
        <svg width="36" height="3" aria-hidden="true">
          <path d="M0 1 H34" stroke="#1d2c49" strokeWidth="2" strokeDasharray="2 2" />
        </svg>
      </Splitter>
      <Departments>
        <ScrollHint width="5" height="3"><path d="M0 3 H5 L2.500 0Z" /></ScrollHint>
        {departments.map(([name, icon]) => (
          <Department key={name} $active={icon === 'production'}>
            <PaneIcon name={icon} />
            {name}
          </Department>
        ))}
        <ScrollHint $end width="5" height="3"><path d="M0 0 H5 L2.500 3Z" /></ScrollHint>
      </Departments>
      <SidebarFooter>
        <Spinner>
          <SpinnerButton aria-label="Πάνω"><Chevron d={chevrons.up} size={9} /></SpinnerButton>
          <SpinnerButton aria-label="Κάτω"><Chevron d={chevrons.down} size={9} /></SpinnerButton>
        </Spinner>
      </SidebarFooter>
    </SidebarBox>
    <HandCursor width="32" height="34" viewBox="0 0 32 34" aria-hidden="true">
      <path d="M12 3 Q12 1 14 1 Q16 1 16 3 V11 Q18 9 20 11.500 Q22 10 24 12.500 Q27 11.500 28 14 L29 16 V26 L28 32 H15 Q10 27 5 21 L1 17 Q1 14 4 15 L12 20Z" fill="#fedd00" stroke="#111" strokeWidth="1.600" strokeLinejoin="round" />
      <path d="M16 10 V14 M20 11.500 V15 M24 12.500 V16" stroke="#111" strokeWidth="1.500" />
    </HandCursor>
  </Sidebar>
)

const General = () => (
  <Panel>
    <FieldColumn>
      <FieldRow>
        <Caption id="code" text="Κωδικός" dots={9} />
        <Box $w={125}>
          <Caret />
          <TextInput id="code" />
          <MiniButton aria-label="Αναζήτηση">
            <svg width="10" height="8"><path d="M1 6 h2 M4 6 h2 M7 6 h2" stroke="#000" strokeWidth="2" /></svg>
          </MiniButton>
        </Box>
        <EditButton aria-label="Επεξεργασία κωδικού">
          <svg width="12" height="12" viewBox="0 0 12 12">
            <path d="M1.500 10.500 L2.500 7.500 L8.500 1 L10.500 3 L4.500 9.500Z" fill="#f29422" stroke="#000" strokeWidth="1.200" />
            <path d="M7.500 2.500 L9 1.500 L10.500 3 L9.500 4.500Z" fill="#d08078" />
            <path d="M1 11 L2.500 8 L4 9.500Z" />
          </svg>
        </EditButton>
      </FieldRow>
      <FieldRow>
        <Caption id="description" text="Περιγραφή" dots={7} />
        <Box $w={249}><TextInput id="description" /></Box>
      </FieldRow>
      <FieldPair>
        <FieldRow>
          <Caption id="type" text="Τύπος" dots={10} />
          <Box $w={125}>
            <Select id="type"><option>Σειριακό</option></Select>
            <MiniButton tabIndex={-1} aria-label="Άνοιγμα"><DownTriangle /></MiniButton>
          </Box>
        </FieldRow>
        <FieldRow>
          <Caption id="status" text="Κατάσταση" dots={7} />
          <Box $w={125} $h={21}>
            <Select id="status"><option>Νέα Εγγραφή</option></Select>
            <MiniButton tabIndex={-1} aria-label="Άνοιγμα"><DownTriangle /></MiniButton>
          </Box>
        </FieldRow>
      </FieldPair>
    </FieldColumn>
    <FieldColumn $lower>
      <FieldRow>
        <Caption wide id="search" text="Κλειδί Αναζήτησης" dots={4} />
        <Box $w={124}><TextInput id="search" /></Box>
      </FieldRow>
      <FieldRow>
        <Caption wide id="versions" text="Αρ. Εκδόσεων" dots={6} />
        <Box $w={124}>
          <TextInput id="versions" />
          <MiniButton aria-label="Λίστα εκδόσεων">
            <svg width="8" height="9"><path d="M4 0 L8 4.500 H5.500 V9 H2.500 V4.500 H0Z" /></svg>
          </MiniButton>
        </Box>
      </FieldRow>
      <FieldRow>
        <Caption wide id="active" text="Ενεργή Έκδοση" dots={5} />
        <Box $w={98}><TextInput id="active" /></Box>
      </FieldRow>
      <FieldRow>
        <Caption wide id="changed" text="Τελ. Ημ/νία Μεταβολής" dots={2} />
        <Box $w={73}><TextInput id="changed" /></Box>
      </FieldRow>
    </FieldColumn>
  </Panel>
)

const RoutingLines = () => (
  <Grid>
    <Lines>
      <Table>
        <colgroup>
          <col width="27" />
          {columns.map(c => <col key={c.title} width={c.width} />)}
        </colgroup>
        <thead>
          <tr>
            <Th aria-label="Επιλογή" />
            {columns.map(c => <Th key={c.title}>{c.title}</Th>)}
          </tr>
        </thead>
        <tbody>
          {Array.from({ length: 11 }, (_, row) => (
            <tr key={row}>
              <RowSelector>
                {row === 0 && (
                  <svg width="15" height="9" viewBox="0 0 15 9">
                    <path d="M0.500 4.500 H7 M3.500 1 V8 M1 2 L6 7 M6 2 L1 7" stroke="#000" />
                    <path d="M8.500 0 L13.500 4.500 L8.500 9Z" />
                  </svg>
                )}
              </RowSelector>
              {columns.map(c => (
                <Td key={c.title} $num={c.value === '0'}>{row === 0 ? c.value : ''}</Td>
              ))}
            </tr>
          ))}
        </tbody>
      </Table>
      <VScroll>
        <VScrollHead />
        <VScrollTrack>
          <ArrowButton aria-label="Πάνω"><Chevron d={chevrons.up} color="#bfbfbf" size={9} /></ArrowButton>
          <ArrowButton aria-label="Κάτω"><Chevron d={chevrons.down} color="#bfbfbf" size={9} /></ArrowButton>
        </VScrollTrack>
      </VScroll>
    </Lines>
    <HScroll>
      <Corner />
      <ArrowButton $w={20} aria-label="Αριστερά"><Chevron d={chevrons.left} size={9} /></ArrowButton>
      <Thumb />
      <Spacer />
      <ArrowButton $w={20} aria-label="Δεξιά"><Chevron d={chevrons.right} size={9} /></ArrowButton>
      <VScroll />
    </HScroll>
  </Grid>
)

const Routing = () => (
  <FormWindow>
    <FormTitleBar>
      <FormGlyph width={19} height={17} />
      <FormTitle>χωρίς τίτλο - Φασεολόγιο</FormTitle>
      <FormButtons>
        <FormButton aria-label="Ελαχιστοποίηση">
          <svg width="18" height="7"><rect x="0.500" y="0.500" width="16" height="5" rx="1" fill="#fff" stroke="#4d5667" /></svg>
        </FormButton>
        <FormButton aria-label="Μεγιστοποίηση">
          <svg width="17" height="15">
            <path fillRule="evenodd" d="M0.500 0.500 H16.500 V14.500 H0.500Z M4.500 4.500 V10.500 H12.500 V4.500Z" fill="#f4f4f4" stroke="#4d5667" />
          </svg>
        </FormButton>
        <FormButton $close aria-label="Κλείσιμο">
          <svg width="18" height="15" viewBox="0 0 18 15">
            <path d="M1 0.700 H6 L9 4 L12 0.700 H17 V3 L12.500 7.500 L17 12 V14.300 H12 L9 11 L6 14.300 H1 V12 L5.500 7.500 L1 3Z" fill="#f6f6f6" stroke="#4b4550" strokeLinejoin="round" />
          </svg>
        </FormButton>
      </FormButtons>
    </FormTitleBar>
    <FormBody>
      <Tab>Γενικά</Tab>
      <General />
      <RoutingLines />
      <Actions>
        <ActionButton><ActionText><u>Φ</u>ασεολόγιο</ActionText><DownTriangle width={10} /></ActionButton>
        <ActionButton><ActionText><u>Ε</u>ργασία</ActionText><DownTriangle width={10} /></ActionButton>
        <ActionButton><ActionText>Λει<u>τ</u>ουργίες</ActionText><DownTriangle width={10} /></ActionButton>
        <ActionButton><ActionText>Βοήθεια</ActionText></ActionButton>
      </Actions>
    </FormBody>
  </FormWindow>
)

const App = () => {
  return (
    <Frame>
      <GlobalStyle />
      <Defs />
      <TitleBar>
        <AppIcon>
          <svg width="19" height="19" viewBox="0 0 19 19" aria-hidden="true">
            <rect x="0.500" y="1.500" width="16" height="15" fill="#f7f9fd" stroke="#9aa3b5" />
            <path d="M1 2.500 H16" stroke="#8aa4d6" strokeWidth="2" />
            <path d="M2 6 H5 M2 8 H5 M2 10 H5" stroke="#7b97cc" />
            <path d="M4 17 Q8 12 10 4 Q11.500 10 10.500 16Z" fill="url(#sail)" />
            <path d="M10.500 16 L13.500 8 L14.500 16.500Z" fill="#2a70b8" />
            <path d="M14 16.500 L17.500 10 V18Z" fill="#5a9a16" />
          </svg>
        </AppIcon>
        <AppTitle>ΚΑΛΩΔΙΟΓΕΝΕΣΙΣ Ε.Π.Ε. - Microsoft Dynamics NAV Classic</AppTitle>
        <CaptionButtons>
          <CaptionButton aria-label="Ελαχιστοποίηση">
            <svg width="14" height="12"><rect y="10" width="14" height="2" fill="#222" /></svg>
          </CaptionButton>
          <CaptionButton aria-label="Μεγιστοποίηση">
            <svg width="15" height="12"><path d="M0.500 1 H14.500 V11.500 H0.500Z" fill="none" stroke="#222" /><rect width="15" height="3" fill="#222" /></svg>
          </CaptionButton>
          <CaptionButton $close aria-label="Κλείσιμο">
            <svg width="11" height="9"><path d="M1 0 L10 9 M10 0 L1 9" stroke="#fff" strokeWidth="2" /></svg>
          </CaptionButton>
        </CaptionButtons>
      </TitleBar>
      <Client>
        <MenuBar>
          {menus.map(m => <MenuItem key={m}>{m}</MenuItem>)}
        </MenuBar>
        <Toolbar>
          {toolGroups.map((group, i) => (
            <ToolGroup key={i}>
              {group.map(([name, icon]) => (
                <ToolButton key={name} aria-label={name}>{icon}</ToolButton>
              ))}
            </ToolGroup>
          ))}
          <ToolGroup $right $gap={10}>
            <ToolButton aria-label="Microsoft Dynamics"><Sails /></ToolButton>
            <ToolButton aria-label="Βοήθεια"><HelpIcon /></ToolButton>
          </ToolGroup>
        </Toolbar>
        <Workspace>
          <Navigation />
          <Desktop>
            <Routing />
          </Desktop>
        </Workspace>
        <StatusBar>
          <StatusCell $pad={2}>Κωδικός:</StatusCell>
          <StatusCell $w={142} $line />
          <StatusCell $w={73} $pad={6} $line>29/03/15</StatusCell>
          <StatusCell $w={72} $line />
          <StatusCell $w={72} $line />
          <StatusCell $w={72} $line $center>NEW</StatusCell>
          <StatusCell $w={72} $center>INS</StatusCell>
          <svg width="19" height="10" viewBox="0 0 19 10" aria-hidden="true">
            <path d="M14 2 h2 M10 5 h2 M14 5 h2 M6 8 h2 M10 8 h2 M14 8 h2" stroke="#b5b5b5" strokeWidth="2" />
          </svg>
        </StatusBar>
      </Client>
    </Frame>
  )
}

export default App
